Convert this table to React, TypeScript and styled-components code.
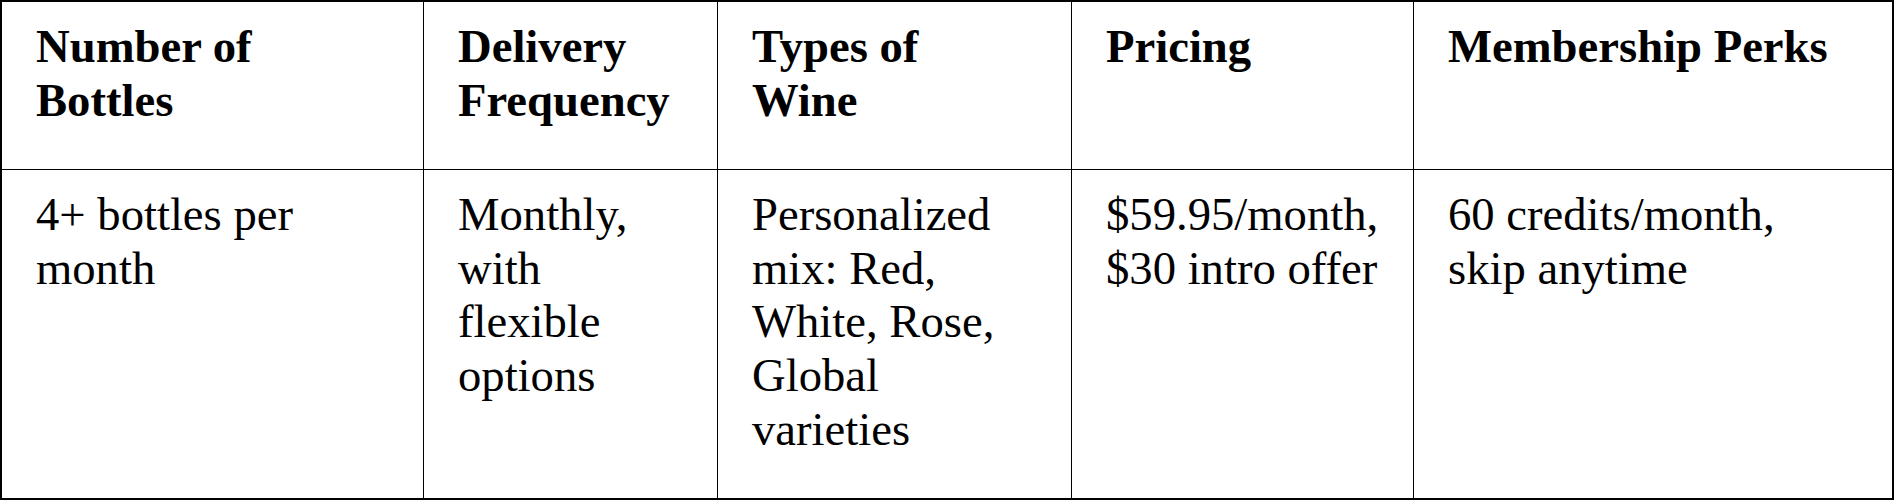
import styled, { createGlobalStyle } from "styled-components";

const GlobalStyle = createGlobalStyle`
  html, body {
    margin: 0;
    padding: 0;
    background: #ffffff;
  }

  * {
    box-sizing: border-box;
  }
`;

// grid with a black background: the 1px gaps draw the inner rules
const Table = styled.div`
  display: grid;
  grid-template-columns: 421px 293px 353px 341px 1fr;
  grid-template-rows: 167px 328px;
  gap: 1px;
  width: 1894px;
  height: 500px;
  background: #000000;
  border: 2px solid #000000;
  font-family: "Liberation Serif", "Times New Roman", serif;
  font-size: 46.67px;
  line-height: 53.67px;
  color: #000000;
`;

const Cell = styled.div<{ $head?: boolean; $padRight?: number }>`
  background: #ffffff;
  padding: 18px ${(p) => p.$padRight ?? 33}px 0 34px;
  font-weight: ${(p) => (p.$head ? 700 : 400)};
`;

const columns = [
  { title: "Number of Bottles", value: "4+ bottles per month" },
  { title: "Delivery Frequency", value: "Monthly, with flexible options" },
  {
    title: "Types of Wine",
    value: "Personalized mix: Red, White, Rose, Global varieties",
    padRight: 44,
  },
  { title: "Pricing", value: "$59.95/month, $30 intro offer", padRight: 28 },
  { title: "Membership Perks", value: "60 credits/month, skip anytime" },
];

const App = () => {
  return (
    <>
      <GlobalStyle />
      <Table role="table">
        {columns.map((c) => (
          <Cell key={c.title} $head $padRight={c.padRight} role="columnheader">
            {c.title}
          </Cell>
        ))}
        {columns.map((c) => (
          <Cell key={c.value} $padRight={c.padRight} role="cell">
            {c.value}
          </Cell>
        ))}
      </Table>
    </>
  );
};

export default App;
